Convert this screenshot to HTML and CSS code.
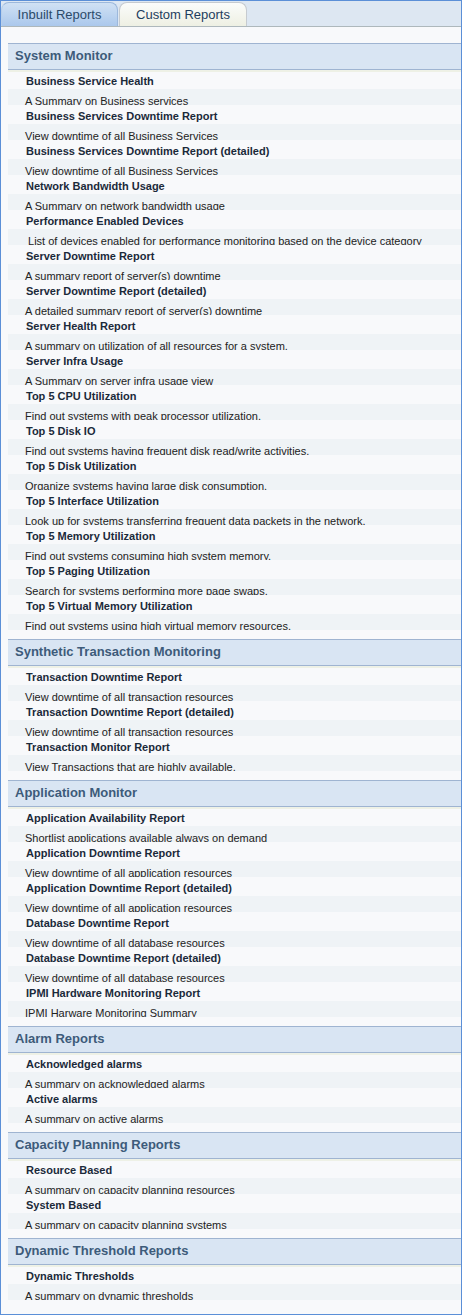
FILE: index.html
```html
<!DOCTYPE html>
<html>
<head>
<meta charset="utf-8">
<link rel="stylesheet" href="styles.css">
</head>
<body>
<div class="panel">
  <div class="tabs">
    <div class="tab tab-active">Inbuilt Reports</div>
    <div class="tab tab-idle">Custom Reports</div>
  </div>
  <div class="content">
    <section class="group">
      <h2 class="group-title">System Monitor</h2>
      <ul class="items">
        <li class="item"><div class="item-title">Business Service Health</div><div class="item-desc">A Summary on Business services</div></li>
        <li class="item"><div class="item-title">Business Services Downtime Report</div><div class="item-desc">View downtime of all Business Services</div></li>
        <li class="item"><div class="item-title">Business Services Downtime Report (detailed)</div><div class="item-desc">View downtime of all Business Services</div></li>
        <li class="item"><div class="item-title">Network Bandwidth Usage</div><div class="item-desc">A Summary on network bandwidth usage</div></li>
        <li class="item"><div class="item-title">Performance Enabled Devices</div><div class="item-desc">&nbsp;List of devices enabled for performance monitoring based on the device category</div></li>
        <li class="item"><div class="item-title">Server Downtime Report</div><div class="item-desc">A summary report of server(s) downtime</div></li>
        <li class="item"><div class="item-title">Server Downtime Report (detailed)</div><div class="item-desc">A detailed summary report of server(s) downtime</div></li>
        <li class="item"><div class="item-title">Server Health Report</div><div class="item-desc">A summary on utilization of all resources for a system.</div></li>
        <li class="item"><div class="item-title">Server Infra Usage</div><div class="item-desc">A Summary on server infra usage view</div></li>
        <li class="item"><div class="item-title">Top 5 CPU Utilization</div><div class="item-desc">Find out systems with peak processor utilization.</div></li>
        <li class="item"><div class="item-title">Top 5 Disk IO</div><div class="item-desc">Find out systems having frequent disk read/write activities.</div></li>
        <li class="item"><div class="item-title">Top 5 Disk Utilization</div><div class="item-desc">Organize systems having large disk consumption.</div></li>
        <li class="item"><div class="item-title">Top 5 Interface Utilization</div><div class="item-desc">Look up for systems transferring frequent data packets in the network.</div></li>
        <li class="item"><div class="item-title">Top 5 Memory Utilization</div><div class="item-desc">Find out systems consuming high system memory.</div></li>
        <li class="item"><div class="item-title">Top 5 Paging Utilization</div><div class="item-desc">Search for systems performing more page swaps.</div></li>
        <li class="item"><div class="item-title">Top 5 Virtual Memory Utilization</div><div class="item-desc">Find out systems using high virtual memory resources.</div></li>
      </ul>
    </section>
    <section class="group">
      <h2 class="group-title">Synthetic Transaction Monitoring</h2>
      <ul class="items">
        <li class="item"><div class="item-title">Transaction Downtime Report</div><div class="item-desc">View downtime of all transaction resources</div></li>
        <li class="item"><div class="item-title">Transaction Downtime Report (detailed)</div><div class="item-desc">View downtime of all transaction resources</div></li>
        <li class="item"><div class="item-title">Transaction Monitor Report</div><div class="item-desc">View Transactions that are highly available.</div></li>
      </ul>
    </section>
    <section class="group">
      <h2 class="group-title">Application Monitor</h2>
      <ul class="items">
        <li class="item"><div class="item-title">Application Availability Report</div><div class="item-desc">Shortlist applications available always on demand</div></li>
        <li class="item"><div class="item-title">Application Downtime Report</div><div class="item-desc">View downtime of all application resources</div></li>
        <li class="item"><div class="item-title">Application Downtime Report (detailed)</div><div class="item-desc">View downtime of all application resources</div></li>
        <li class="item"><div class="item-title">Database Downtime Report</div><div class="item-desc">View downtime of all database resources</div></li>
        <li class="item"><div class="item-title">Database Downtime Report (detailed)</div><div class="item-desc">View downtime of all database resources</div></li>
        <li class="item"><div class="item-title">IPMI Hardware Monitoring Report</div><div class="item-desc">IPMI Harware Monitoring Summary</div></li>
      </ul>
    </section>
    <section class="group">
      <h2 class="group-title">Alarm Reports</h2>
      <ul class="items">
        <li class="item"><div class="item-title">Acknowledged alarms</div><div class="item-desc">A summary on acknowledged alarms</div></li>
        <li class="item"><div class="item-title">Active alarms</div><div class="item-desc">A summary on active alarms</div></li>
      </ul>
    </section>
    <section class="group">
      <h2 class="group-title">Capacity Planning Reports</h2>
      <ul class="items">
        <li class="item"><div class="item-title">Resource Based</div><div class="item-desc">A summary on capacity planning resources</div></li>
        <li class="item"><div class="item-title">System Based</div><div class="item-desc">A summary on capacity planning systems</div></li>
      </ul>
    </section>
    <section class="group">
      <h2 class="group-title">Dynamic Threshold Reports</h2>
      <ul class="items">
        <li class="item"><div class="item-title">Dynamic Thresholds</div><div class="item-desc">A summary on dynamic thresholds</div></li>
      </ul>
    </section>
  </div>
</div>
</body>
</html>
```

FILE: styles.css
```css
html, body {
  margin: 0;
  padding: 0;
  background: #ffffff;
}

body {
  font-family: "Liberation Sans", Arial, sans-serif;
}

.panel {
  box-sizing: border-box;
  width: 462px;
  height: 1315px;
  border: 1px solid #5b8fd7;
  background: #f8f9fb;
  display: flex;
  flex-direction: column;
}

.tabs {
  box-sizing: border-box;
  height: 26px;
  padding-top: 1px;
  background: #dde7f2;
  border-bottom: 1px solid #aeb8bc;
  display: flex;
  align-items: flex-end;
  gap: 1px;
}

.tab {
  box-sizing: border-box;
  height: 24px;
  border: 1px solid;
  border-bottom: none;
  border-radius: 8px 8px 0 0;
  font-size: 13px;
  line-height: 23px;
  white-space: nowrap;
  text-align: center;
}

.tab-active {
  width: 117px;
  border-color: #9cb8dc;
  border-left-color: #b8cfea;
  background: linear-gradient(#d0e1f4, #abc8ec);
  color: #2b4a6a;
}

.tab-idle {
  width: 128px;
  border-color: #c6cbd0;
  background: linear-gradient(#fbfcfb, #eef0e3);
  color: #1e3d5e;
}

.content {
  padding: 16px 0 0 7px;
  display: flex;
  flex-direction: column;
  gap: 9px;
}

.group {
  margin: 0;
}

.group-title {
  margin: 0;
  box-sizing: border-box;
  height: 27px;
  padding-left: 7px;
  border-top: 1px solid #9fb4d1;
  border-bottom: 1px solid #9fb4d1;
  background: #d9e5f3;
  color: #3d5b7a;
  font-size: 13px;
  font-weight: bold;
  line-height: 24px;
}

.items {
  list-style: none;
  margin: 0;
  padding: 0;
}

.item-title {
  box-sizing: border-box;
  height: 19px;
  padding: 3px 0 0 18px;
  background: #f8f9fb;
  color: #1b2a3a;
  font-size: 11px;
  font-weight: bold;
  line-height: 16px;
  white-space: nowrap;
  overflow: hidden;
}

.item:first-child .item-title {
  box-shadow: inset 0 2px 0 #eef1e6;
}

.item-desc {
  box-sizing: border-box;
  height: 16px;
  padding: 4px 0 0 17px;
  background: #eff3f6;
  color: #222222;
  font-size: 11px;
  line-height: 16px;
  white-space: nowrap;
  overflow: hidden;
}
```
